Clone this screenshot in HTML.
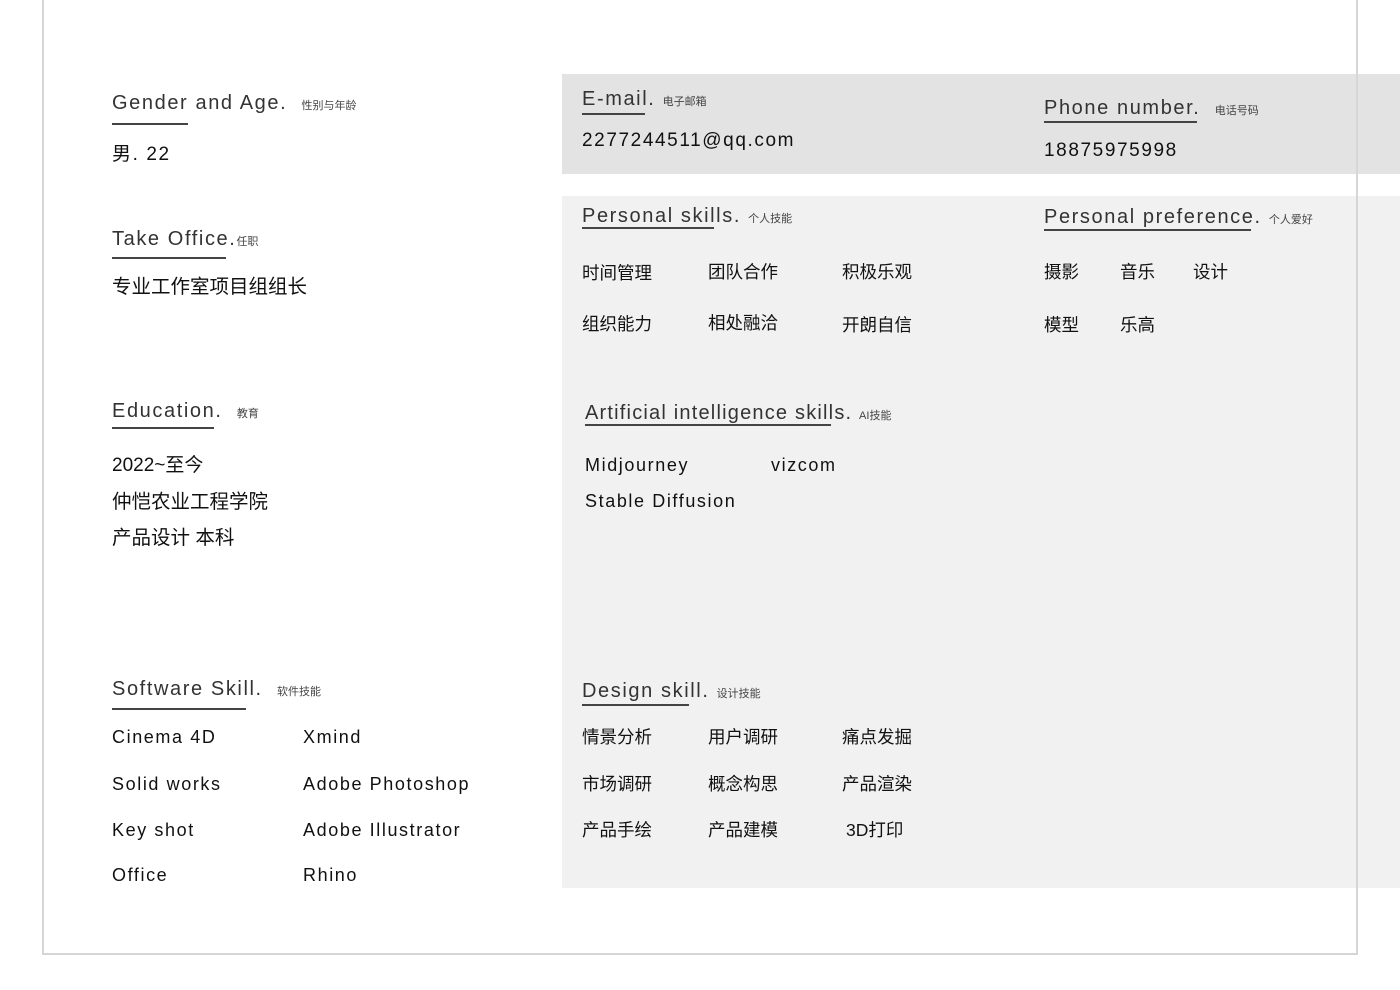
<!DOCTYPE html>
<html><head><meta charset="utf-8"><style>
body{margin:0;width:1400px;height:990px;background:#fff;position:relative;overflow:hidden;font-family:"Liberation Sans","Noto Sans CJK SC",sans-serif;color:#111}
.a{position:absolute;white-space:nowrap;line-height:1}
.h{font-size:20px;color:#333;letter-spacing:1.6px}
.s{font-size:11px;color:#444;letter-spacing:0}
.u{position:absolute;height:2px;background:#444}
.t{font-size:18px;color:#111;letter-spacing:1.6px}
.c{font-size:17.5px;color:#111}
</style></head><body>
<div style="position:absolute;left:562px;top:74px;width:838px;height:100px;background:#e3e3e3"></div>
<div style="position:absolute;left:562px;top:196px;width:838px;height:692px;background:#f1f1f1"></div>
<div style="position:absolute;left:42px;top:0;width:2px;height:955px;background:#d6d6d6"></div>
<div style="position:absolute;left:1356px;top:0;width:2px;height:955px;background:#d6d6d6"></div>
<div style="position:absolute;left:42px;top:953px;width:1316px;height:2px;background:#d6d6d6"></div>

<div class="a h" style="left:112px;top:93px">Gender and Age.&nbsp; <span class="s">性别与年龄</span></div>
<div class="u" style="left:112px;top:123px;width:76px"></div>
<div class="a t" style="left:112px;top:145px;font-size:19px">男.&nbsp;22</div>

<div class="a h" style="left:112px;top:229px">Take Office.<span class="s">任职</span></div>
<div class="u" style="left:112px;top:257px;width:114px"></div>
<div class="a c" style="left:112px;top:278px;font-size:19.5px">专业工作室项目组组长</div>

<div class="a h" style="left:112px;top:401px">Education.&nbsp; <span class="s">教育</span></div>
<div class="u" style="left:112px;top:427px;width:102px"></div>
<div class="a c" style="left:112px;top:456px;font-size:19px">2022~至今</div>
<div class="a c" style="left:112px;top:493px;font-size:19.5px">仲恺农业工程学院</div>
<div class="a c" style="left:112px;top:529px;font-size:19.5px">产品设计 本科</div>

<div class="a h" style="left:112px;top:679px">Software Skill.&nbsp; <span class="s">软件技能</span></div>
<div class="u" style="left:112px;top:708px;width:134px"></div>
<div class="a t" style="left:112px;top:728px">Cinema 4D</div>
<div class="a t" style="left:303px;top:728px">Xmind</div>
<div class="a t" style="left:112px;top:775px">Solid works</div>
<div class="a t" style="left:303px;top:775px">Adobe Photoshop</div>
<div class="a t" style="left:112px;top:821px">Key shot</div>
<div class="a t" style="left:303px;top:821px">Adobe Illustrator</div>
<div class="a t" style="left:112px;top:866px">Office</div>
<div class="a t" style="left:303px;top:866px">Rhino</div>

<div class="a h" style="left:582px;top:89px">E-mail. <span class="s">电子邮箱</span></div>
<div class="u" style="left:582px;top:113px;width:63px"></div>
<div class="a t" style="left:582px;top:131px;font-size:19px">2277244511@qq.com</div>

<div class="a h" style="left:1044px;top:98px">Phone number.&nbsp; <span class="s">电话号码</span></div>
<div class="u" style="left:1044px;top:121px;width:153px"></div>
<div class="a t" style="left:1044px;top:141px;font-size:19px">18875975998</div>

<div class="a h" style="left:582px;top:206px">Personal skills.&nbsp;<span class="s">个人技能</span></div>
<div class="u" style="left:582px;top:227px;width:132px"></div>
<div class="a c" style="left:582px;top:265px">时间管理</div>
<div class="a c" style="left:708px;top:264px">团队合作</div>
<div class="a c" style="left:842px;top:264px">积极乐观</div>
<div class="a c" style="left:582px;top:316px">组织能力</div>
<div class="a c" style="left:708px;top:315px">相处融洽</div>
<div class="a c" style="left:842px;top:317px">开朗自信</div>

<div class="a h" style="left:1044px;top:207px">Personal preference. <span class="s">个人爱好</span></div>
<div class="u" style="left:1044px;top:229px;width:207px"></div>
<div class="a c" style="left:1044px;top:264px">摄影</div>
<div class="a c" style="left:1120px;top:264px">音乐</div>
<div class="a c" style="left:1193px;top:264px">设计</div>
<div class="a c" style="left:1044px;top:317px">模型</div>
<div class="a c" style="left:1120px;top:317px">乐高</div>

<div class="a h" style="left:585px;top:403px;letter-spacing:1.2px">Artificial intelligence skills. <span class="s">AI技能</span></div>
<div class="u" style="left:585px;top:424px;width:246px"></div>
<div class="a t" style="left:585px;top:456px">Midjourney</div>
<div class="a t" style="left:771px;top:456px">vizcom</div>
<div class="a t" style="left:585px;top:492px">Stable Diffusion</div>

<div class="a h" style="left:582px;top:681px">Design skill.&nbsp;<span class="s">设计技能</span></div>
<div class="u" style="left:582px;top:704px;width:107px"></div>
<div class="a c" style="left:582px;top:729px">情景分析</div>
<div class="a c" style="left:708px;top:729px">用户调研</div>
<div class="a c" style="left:842px;top:729px">痛点发掘</div>
<div class="a c" style="left:582px;top:776px">市场调研</div>
<div class="a c" style="left:708px;top:776px">概念构思</div>
<div class="a c" style="left:842px;top:776px">产品渲染</div>
<div class="a c" style="left:582px;top:822px">产品手绘</div>
<div class="a c" style="left:708px;top:822px">产品建模</div>
<div class="a c" style="left:846px;top:822px">3D打印</div>
</body></html>
